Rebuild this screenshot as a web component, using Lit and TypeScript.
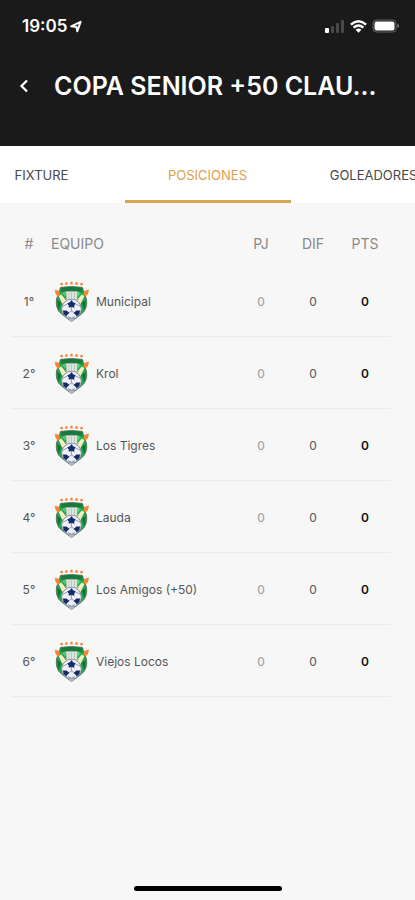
import { LitElement, html, css, svg } from "lit";
import { customElement, state } from "lit/decorators.js";
import { classMap } from "lit/directives/class-map.js";

interface Team {
  name: string;
  played: number;
  diff: number;
  points: number;
}

const TEAMS: Team[] = ["Municipal", "Krol", "Los Tigres", "Lauda", "Los Amigos (+50)", "Viejos Locos"].map(
  (name) => ({ name, played: 0, diff: 0, points: 0 })
);

const TABS = ["FIXTURE", "POSICIONES", "GOLEADORES"];

@customElement("status-bar")
class StatusBar extends LitElement {
  static styles = css`
    :host {
      display: flex;
      align-items: center;
      justify-content: space-between;
      height: 20px;
      padding: 16px 15px 0 22px;
    }
    .group {
      display: flex;
      align-items: center;
      gap: 5px;
    }
    .time {
      font-size: 17px;
      line-height: 20px;
      font-weight: 600;
    }
    .left {
      gap: 3px;
    }
    svg {
      display: block;
    }
  `;
  render() {
    return html`
      <div class="group left">
        <span class="time">19:05</span>
        <svg width="12" height="13" viewBox="0 0 12 13" aria-hidden="true">
          <path d="M1.2 6.3 10.6 1.8 7.3 11.2 6.4 6.9Z" fill="none" stroke="#fff" stroke-width="2" stroke-linejoin="round" />
        </svg>
      </div>
      <div class="group">
        <svg width="20" height="13" viewBox="0 0 20 13" aria-hidden="true">
          <rect x="0" y="8" width="4" height="5" rx="1" fill="#fff" />
          <rect x="6" y="6" width="3" height="7" rx="1" fill="#494949" />
          <rect x="11" y="3" width="3" height="10" rx="1" fill="#494949" />
          <rect x="16" y="0" width="3" height="13" rx="1" fill="#494949" />
        </svg>
        <svg width="17" height="13" viewBox="0 0 17 13" aria-hidden="true">
          <g fill="none" stroke="#fff" stroke-width="2.5">
            <path d="M.9 4.6Q8.5-2 16.1 4.6" />
            <path d="M3.6 7.6Q8.5 3.4 13.4 7.6" />
          </g>
          <path d="M5.6 9.7Q8.5 7.2 11.4 9.7L8.5 12.8Z" fill="#fff" />
        </svg>
        <svg width="28" height="14" viewBox="0 0 28 14" aria-hidden="true">
          <rect x="1" y="1" width="23" height="12" rx="3.5" fill="none" stroke="#666" />
          <rect x="2.500" y="2.500" width="20" height="9" rx="2" fill="#fff" />
          <path d="M25.500 4.500Q28.500 7 25.500 9.500Z" fill="#888" />
        </svg>
      </div>
    `;
  }
}

@customElement("team-crest")
class TeamCrest extends LitElement {
  static styles = css`
    :host {
      display: block;
      width: 36px;
      height: 42px;
    }
    svg {
      display: block;
    }
  `;
  render() {
    const star = (x: number, y: number) =>
      svg`<path transform="translate(${x} ${y})" d="M0-1.9.6-.6 1.9-.5.9.4 1.2 1.7 0 1-1.2 1.7-.9.4-1.9-.5-.6-.6Z" fill="#f5792a" />`;
    return html`
      <svg width="36" height="42" viewBox="0 0 36 42" aria-hidden="true">
        ${[[7.5, 3], [12.5, 2.4], [17.5, 2.2], [22.5, 2.4], [27.5, 3]].map(([x, y]) => star(x, y))}
        <path d="M6.500 6.500Q17.500 4.500 28.500 6.500L30 11.500 32.500 18Q34 28 27 33.500L17.500 40.500 8 33.500Q1 28 2.500 18L5 11.500Z" fill="#22a04a" stroke="#44644f" stroke-width=".8" />
        <path d="M7 7Q17.500 5 28 7L27.500 11Q17.500 8.500 7.500 11Z" fill="#1c7740" />
        <path d="M3.500 19 7 22 4.500 29ZM31.500 19 28 22 30.500 29Z" fill="#0d7034" />
        <path d="M8 12 12 10.500 11 16ZM27 12 23 10.500 24 16Z" fill="#4bd36c" />
        <path d="M4.500 15 7.500 13.500 12.500 20 8.500 23ZM30.500 15 27.500 13.500 22.500 20 26.500 23Z" fill="#f6edbd" />
        <path d="M1 8.500 5 10 6.500 13.500 4 15.500 1.500 13ZM35 8.500 30.500 10 29 13.500 31.500 15.500 34 13Z" fill="#f58432" />
        <path d="M12 10.500H23.500L23 20H12.500Z" fill="#dde5e1" stroke="#a4b5ac" stroke-width=".6" />
        <path d="M15 11V19M17.500 11V19M20.500 11V19" stroke="#b2beb8" stroke-width=".7" />
        <path d="M8 32 17.500 40.500 27 32Z" fill="#c1c9d4" />
        <circle cx="17.500" cy="28" r="9.800" fill="#eef1f8" stroke="#8994a7" />
        <path d="M17.500 19 19.200 21.300 21.800 22.300 20.300 24.500 20.300 26.800 17.500 26 14.700 26.800 14.700 24.500 13.200 22.300 15.800 21.300Z" fill="#172f70" />
        <path d="M9 29.500 12.500 29.500 15.500 32 13.500 33.500 12.500 35.500 9.500 33ZM26 29.500 22.500 29.500 19.500 32 21.500 33.500 22.500 35.500 25.500 33Z" fill="#172b63" />
        <path d="M17.500 26V30M15 31.500 17.500 30 20 31.500M9 25 13.500 23M26 25 21.500 23M14 35.500 17.500 37 21 35.500" fill="none" stroke="#8793ad" stroke-width=".9" />
      </svg>
    `;
  }
}

@customElement("standings-table")
class StandingsTable extends LitElement {
  static styles = css`
    :host {
      display: block;
      padding: 20px 24px 0 11px;
    }
    table {
      width: 100%;
      table-layout: fixed;
      border-collapse: separate;
      border-spacing: 0;
      color: #555;
      font-size: 12px;
      line-height: 16px;
    }
    th,
    td {
      padding: 0;
      text-align: center;
      font-weight: 400;
      box-sizing: border-box;
    }
    th {
      height: 42px;
      color: #8a8a8a;
      font-size: 14px;
    }
    td {
      height: 72px;
      padding-top: 2px;
      border-bottom: 1px solid #ececec;
    }
    .rank {
      width: 36px;
    }
    .num {
      width: 52px;
    }
    th.team {
      padding-left: 4px;
      text-align: left;
    }
    .club {
      display: flex;
      align-items: center;
      gap: 6px;
      padding-left: 7px;
    }
    .played {
      color: #999;
    }
    .points {
      color: #111;
      font-weight: 600;
    }
  `;
  render() {
    return html`
      <table>
        <thead>
          <tr>
            <th class="rank" scope="col">#</th>
            <th class="team" scope="col">EQUIPO</th>
            <th class="num" scope="col">PJ</th>
            <th class="num" scope="col">DIF</th>
            <th class="num" scope="col">PTS</th>
          </tr>
        </thead>
        <tbody>
          ${TEAMS.map(
            (team, i) => html`
              <tr>
                <td>${i + 1}°</td>
                <td>
                  <div class="club"><team-crest></team-crest><span>${team.name}</span></div>
                </td>
                <td class="played">${team.played}</td>
                <td>${team.diff}</td>
                <td class="points">${team.points}</td>
              </tr>
            `
          )}
        </tbody>
      </table>
    `;
  }
}

@customElement("app-root")
class AppRoot extends LitElement {
  @state() private active = 1;

  static styles = css`
    :host {
      display: flex;
      flex-direction: column;
      min-height: 100vh;
      overflow: hidden;
      background: #f7f7f7;
      font-family: Inter, "Liberation Sans", sans-serif;
    }
    header {
      background: #1a1a1a;
      color: #fff;
      padding-bottom: 44px;
    }
    .bar {
      display: flex;
      align-items: center;
      padding: 34px 16px 0 12px;
    }
    .back {
      display: flex;
      align-items: center;
      justify-content: center;
      width: 24px;
      height: 32px;
      padding: 0;
      border: 0;
      background: none;
      color: inherit;
    }
    h1 {
      margin: 0 0 0 18px;
      font-size: 25px;
      line-height: 32px;
      font-weight: 600;
      white-space: nowrap;
    }
    nav {
      display: flex;
      justify-content: center;
      height: 57px;
      background: #fff;
    }
    .tab {
      flex: 0 0 40%;
      box-sizing: border-box;
      padding: 3px 0 0;
      border: 0;
      border-bottom: 3px solid transparent;
      background: none;
      color: #484848;
      font-family: inherit;
      font-size: 13px;
      line-height: 16px;
    }
    .tab.active {
      color: #dda04a;
      border-bottom-color: #d9a555;
    }
    main {
      flex: 1;
    }
    footer {
      display: flex;
      justify-content: center;
      padding-bottom: 9px;
    }
    .home {
      width: 148px;
      height: 5px;
      border-radius: 3px;
      background: #000;
    }
  `;
  render() {
    return html`
      <header>
        <status-bar></status-bar>
        <div class="bar">
          <button class="back" aria-label="Volver">
            <svg width="10" height="14" viewBox="0 0 10 14" aria-hidden="true">
              <path d="M8 1.500 2.500 7 8 12.500" fill="none" stroke="currentColor" stroke-width="2.200" />
            </svg>
          </button>
          <h1>COPA SENIOR +50 CLAU...</h1>
        </div>
      </header>
      <nav>
        ${TABS.map(
          (label, i) => html`
            <button class=${classMap({ tab: true, active: i === this.active })} @click=${() => (this.active = i)}>
              ${label}
            </button>
          `
        )}
      </nav>
      <main><standings-table></standings-table></main>
      <footer><div class="home"></div></footer>
    `;
  }
}
